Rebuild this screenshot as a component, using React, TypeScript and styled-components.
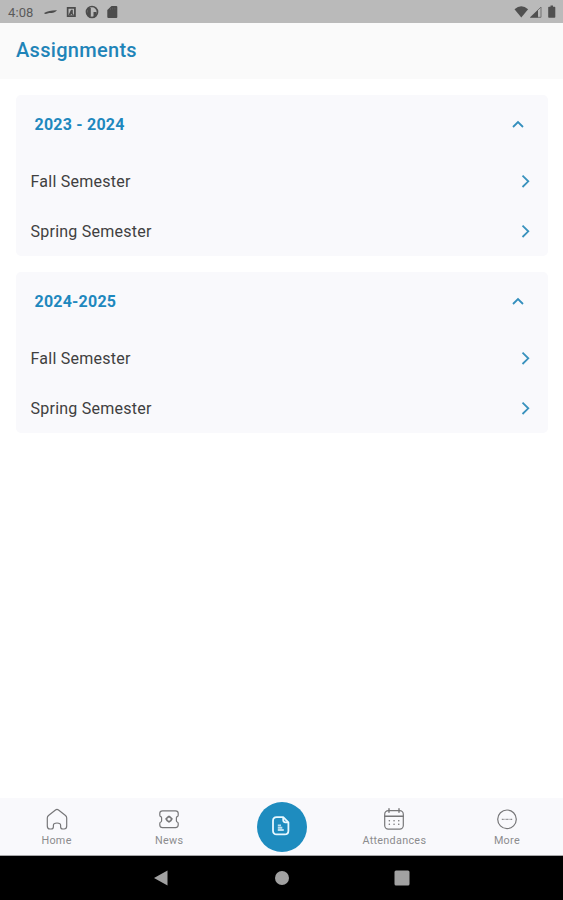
import React from 'react';
import styled, { createGlobalStyle } from 'styled-components';

const GlobalStyle = createGlobalStyle`
  * { box-sizing: border-box; }
  html, body { margin: 0; padding: 0; background: #fff; }
  body { font-family: Roboto, "Liberation Sans", sans-serif; }
  button { border: 0; padding: 0; background: none; font: inherit; text-align: left; cursor: pointer; }
  svg { display: block; flex: none; }
`;

const Screen = styled.div`
  display: flex;
  flex-direction: column;
  width: 100%;
  height: 900px;
  background: #fff;
  overflow: hidden;
`;

const StatusBar = styled.div`
  display: flex;
  align-items: center;
  justify-content: space-between;
  flex: none;
  height: 23px;
  padding: 1px 6px 0 8px;
  background: #bababa;
  color: #5a5a5a;
`;

const StatusGroup = styled.div`
  display: flex;
  align-items: center;
`;

const Clock = styled.span`
  width: 35px;
  padding-top: 1px;
  font-size: 13px;
  line-height: 21px;
  letter-spacing: 0.1px;
`;

const Header = styled.header`
  flex: none;
  height: 56px;
  padding: 0 16px;
  background: #fafafa;
`;

const Title = styled.h1`
  margin: 0;
  font-size: 20px;
  font-weight: 500;
  line-height: 55px;
  letter-spacing: 0.3px;
  color: #1f84b8;
`;

const Content = styled.main`
  display: flex;
  flex-direction: column;
  flex: 1;
  gap: 16px;
  padding: 16px 15px 0 16px;
`;

const Card = styled.section`
  height: 161px;
  border-radius: 5px;
  background: #f9f9fc;
`;

const YearRow = styled.button`
  display: flex;
  align-items: center;
  justify-content: space-between;
  width: 100%;
  height: 61px;
  padding: 0 24px 3px 18.5px;
`;

const Year = styled.span`
  padding-top: 1px;
  font-size: 16px;
  font-weight: 700;
  line-height: 20px;
  letter-spacing: 0.22px;
  color: #1e88be;
`;

const SemesterRow = styled.button`
  display: flex;
  align-items: center;
  justify-content: space-between;
  width: 100%;
  height: 50px;
  padding: 0 18px 0 14.5px;
`;

const Semester = styled.span`
  padding-top: 2px;
  font-size: 16px;
  line-height: 20px;
  letter-spacing: 0.24px;
  color: #404040;
`;

const TabBar = styled.nav`
  display: grid;
  grid-template-columns: repeat(5, 1fr);
  flex: none;
  height: 58px;
  background: #f9f9fc;
  border-bottom: 1px solid #a7a7a9;
`;

const Tab = styled.button`
  display: flex;
  flex-direction: column;
  align-items: center;
  gap: 4px;
  padding: 10px 0 0 0.5px;
  color: #777779;
`;

const TabLabel = styled.span`
  font-size: 10.8px;
  line-height: 13px;
  letter-spacing: 0.3px;
  color: #8c8c8e;
`;

const ActiveTab = styled.button`
  display: flex;
  align-items: center;
  justify-content: center;
  justify-self: center;
  width: 50px;
  height: 50px;
  margin: 4px 0 0 1px;
  padding: 0 1px 2px 0;
  border-radius: 50%;
  background: #1e8cbf;
`;

const SystemBar = styled.div`
  display: flex;
  align-items: center;
  justify-content: center;
  gap: 104px;
  flex: none;
  height: 44px;
  background: #000;
`;

const SystemKeys = styled.svg`
  width: 16px;
  height: 16px;
  fill: #a1a1a1;
`;

const StatusIcons = () => (
  <svg width="78" height="18" viewBox="43 3 78 18" fill="#4c4c4c">
    <path d="M44.500 12.800c3-1.800 7-2.700 12.500-2.600-1.500 2-4.600 3-7.800 2.900l-3.500.8-1.500-.3z" />
    <path fillRule="evenodd" d="M66.800 7h9v10h-9zM68.500 8.800v6.400H74V8.800z" />
    <path d="M68.500 15.200 71 9.800h1.800v3.400l1.200 2h-1.500l-1-1.300-1.400 1.300z" />
    <circle cx="92" cy="12" r="5.500" fill="none" stroke="#4c4c4c" strokeWidth="1.700" />
    <path d="M88 8h2.800v8.500h-2.200l-1.800-2zM93.500 12h3v3l-3 2z" />
    <path d="M111.500 6h4.800q1 0 1 1v10q0 1-1 1h-8q-1 0-1-1v-7z" />
    <path d="M110.500 8v2M112.700 7.600v2M114.900 7.600v2" stroke="#666" strokeWidth=".6" />
  </svg>
);

const SignalIcons = () => (
  <svg width="43" height="18" viewBox="514 3 43 18" fill="#505050">
    <path d="M514.500 9.200q6.800-5.800 13.600 0L521.300 17.600z" />
    <path d="M541 7v10.300h-10.500z" fill="none" stroke="#707070" />
    <path d="M538 10v7.500h-8z" />
    <path d="M550.500 5.500h2.500v1.300h1.500q.8 0 .8.800v9.400q0 .8-.8.800h-5.500q-.8 0-.8-.8V7.600q0-.8.8-.8h1.500z" />
  </svg>
);

const ChevronUp = () => (
  <svg width="12" height="8" viewBox="0 0 12 8" fill="none" stroke="#348fbd" strokeWidth="1.800">
    <path d="M1 7 6 2l5 5" />
  </svg>
);

const ChevronRight = () => (
  <svg width="9" height="14" viewBox="0 0 9 14" fill="none" stroke="#3992bd" strokeWidth="1.800">
    <path d="M1.500 1.600 7.300 7.300l-5.800 5.700" />
  </svg>
);

const tabIconProps = {
  width: 22,
  height: 22,
  viewBox: '0 0 22 22',
  fill: 'none',
  stroke: 'currentColor',
  strokeWidth: 1.2,
  strokeLinecap: 'round' as const,
  strokeLinejoin: 'round' as const,
};

const HomeIcon = () => (
  <svg {...tabIconProps}>
    <path d="M1.300 10q0-1.500 1.200-2.500l7-5.500q1.500-1.200 3 0l7 5.500q1.200 1 1.200 2.500v8q0 3-2.600 3h-1.200q-2.300 0-2.300-2.300v-1.500q0-2.200-3.600-2.200t-3.600 2.200v1.500Q7.400 21 5.100 21H3.900q-2.600 0-2.600-3z" />
  </svg>
);

const NewsIcon = () => (
  <svg {...tabIconProps}>
    <path d="M4.500 2.800h13q2.700 0 2.700 2.500v1.900q0 1-1 1.400-.8.400-.8 1.200v3q0 .8.800 1.200 1 .4 1 1.400v1.700q0 2.500-2.700 2.500h-13q-2.700 0-2.700-2.500v-1.700q0-1 1-1.400.8-.4.800-1.200v-3q0-.8-.8-1.200-1-.4-1-1.400V5.300Q1.800 2.800 4.500 2.800z" />
    <path d="m11 8.400 1.500 1.100 1.400 1.300-1.100 1.800L11 13.900l-1.800-1.300-1.100-1.800 1.400-1.300z" strokeWidth="1.700" />
  </svg>
);

const CalendarIcon = () => (
  <svg {...tabIconProps}>
    <rect x="1.700" y="2.600" width="18.600" height="18.600" rx="3.600" />
    <path d="M1.700 8.300h18.600M6 .8v3.400M16 .8v3.400" strokeWidth="1.400" />
    <path d="M6.300 12.700h.1M11 12.700h.1M15.700 12.700h.1M6.300 16.300h.1M11 16.300h.1M15.700 16.300h.1" strokeWidth="1.500" />
  </svg>
);

const MoreIcon = () => (
  <svg {...tabIconProps}>
    <circle cx="11" cy="11.300" r="9.300" />
    <path d="M6.800 11.300h.1M11 11.300h.1M15.200 11.300h.1" strokeWidth="1.200" />
    <path d="M6 11.300h10" strokeWidth=".5" />
  </svg>
);

const DocumentIcon = () => (
  <svg width="20" height="20" viewBox="0 0 20 20" fill="none" stroke="#e7f8ff" strokeWidth="1.800" strokeLinejoin="round">
    <path d="M5.700 1.200h6.500l5.200 5.200v8.300q0 3.700-3.700 3.700h-8Q2 18.400 2 14.700V4.900q0-3.700 3.700-3.700z" />
    <path d="M12.200 1.500v2.600q0 2.200 2.200 2.200h2.800" />
    <path d="M6.800 9.400h3.200M6.800 11.700h4.500M6.800 14h6" stroke="#b9dff1" strokeWidth="1.900" />
  </svg>
);

const years = [
  { label: '2023 - 2024', semesters: ['Fall Semester', 'Spring Semester'] },
  { label: '2024-2025', semesters: ['Fall Semester', 'Spring Semester'] },
];

export default function App() {
  return (
    <>
      <GlobalStyle />
      <Screen>
        <StatusBar>
          <StatusGroup>
            <Clock>4:08</Clock>
            <StatusIcons />
          </StatusGroup>
          <SignalIcons />
        </StatusBar>
        <Header>
          <Title>Assignments</Title>
        </Header>
        <Content>
          {years.map((year) => (
            <Card key={year.label}>
              <YearRow>
                <Year>{year.label}</Year>
                <ChevronUp />
              </YearRow>
              {year.semesters.map((semester) => (
                <SemesterRow key={semester}>
                  <Semester>{semester}</Semester>
                  <ChevronRight />
                </SemesterRow>
              ))}
            </Card>
          ))}
        </Content>
        <TabBar>
          <Tab><HomeIcon /><TabLabel>Home</TabLabel></Tab>
          <Tab><NewsIcon /><TabLabel>News</TabLabel></Tab>
          <ActiveTab aria-label="Assignments"><DocumentIcon /></ActiveTab>
          <Tab><CalendarIcon /><TabLabel>Attendances</TabLabel></Tab>
          <Tab><MoreIcon /><TabLabel>More</TabLabel></Tab>
        </TabBar>
        <SystemBar>
          <SystemKeys viewBox="0 0 16 16"><path d="M-.2 8 13.500.5v15z" /></SystemKeys>
          <SystemKeys viewBox="0 0 16 16"><circle cx="8" cy="8" r="7" /></SystemKeys>
          <SystemKeys viewBox="0 0 16 16"><rect x=".5" y=".5" width="15" height="15" rx="1.500" /></SystemKeys>
        </SystemBar>
      </Screen>
    </>
  );
}
